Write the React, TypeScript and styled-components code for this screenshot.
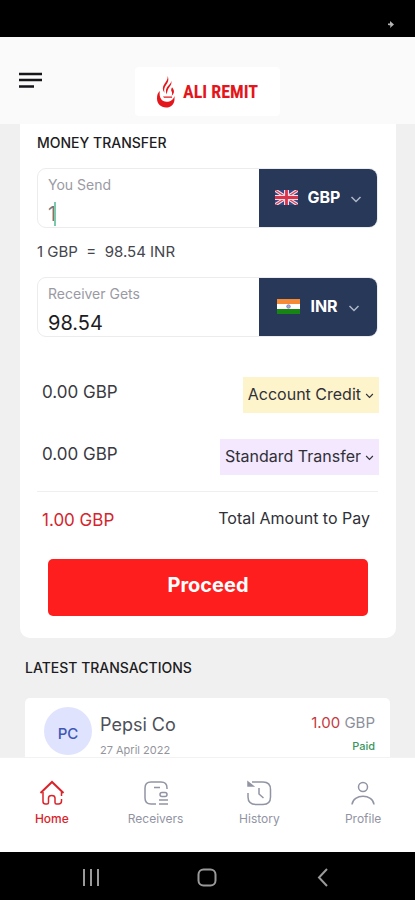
import React, { useState } from "react";
import styled, { createGlobalStyle } from "styled-components";

const GlobalStyle = createGlobalStyle`
  * { box-sizing: border-box; }
  body {
    margin: 0;
    font-family: Inter, "Open Sans", sans-serif;
    color: #1c1c22;
    background: #f0f0f0;
  }
  h2, p { margin: 0; }
  button, input, select { font: inherit; color: inherit; }
`;

const Screen = styled.div`
  display: flex;
  flex-direction: column;
  height: 100vh;
`;

const StatusBar = styled.div`
  display: flex;
  justify-content: flex-end;
  align-items: flex-end;
  flex: none;
  height: 37px;
  padding: 0 21px 8px;
  background: #000;
`;

const Header = styled.header`
  display: grid;
  grid-template-columns: 1fr auto 1fr;
  align-items: center;
  flex: none;
  height: 87px;
  padding: 22px 16px 0;
  background: #fafafa;
`;

const MenuButton = styled.button`
  display: flex;
  justify-self: start;
  align-self: start;
  margin-top: 13px;
  padding: 0 3px;
  border: 0;
  background: none;
`;

const Logo = styled.a`
  display: flex;
  align-items: center;
  gap: 8px;
  height: 49px;
  padding: 0 22px;
  border-radius: 4px;
  background: #fff;
  color: #e4161b;
  font-family: "Liberation Sans Narrow", "Roboto Condensed", "Open Sans Condensed", "Liberation Sans", sans-serif;
  font-size: 18px;
  font-weight: 700;
  text-decoration: none;
  white-space: nowrap;
`;

const Content = styled.main`
  flex: 1;
  min-height: 0;
  overflow-y: auto;
  scrollbar-width: none;
`;

const TransferCard = styled.form`
  margin: 0 19px 0 20px;
  padding: 9px 18px 22px 17px;
  border-radius: 0 0 10px 10px;
  background: #fff;
`;

const Title = styled.h2`
  font-size: 14px;
  line-height: 20px;
  font-weight: 500;
`;

const AmountBox = styled.div`
  display: flex;
  height: 60px;
  border: 1px solid #ececef;
  border-radius: 9px;
  overflow: hidden;
`;

const SendBox = styled(AmountBox)`
  margin-top: 15px;
`;

const AmountField = styled.label`
  display: flex;
  flex: 1;
  flex-direction: column;
  min-width: 0;
  padding: 7px 10px 0;
  color: #9a9aa3;
  font-size: 14px;
  line-height: 18px;
`;

const AmountLine = styled.span`
  display: flex;
  align-items: center;
  margin-top: 8px;
`;

const AmountInput = styled.input<{ $short?: boolean }>`
  width: ${(p) => (p.$short ? "6px" : "100%")};
  height: 24px;
  padding: 0;
  border: 0;
  outline: 0;
  background: none;
  color: ${(p) => (p.$short ? "#77777d" : "#1c1c22")};
  font-size: 20px;
`;

const Caret = styled.span`
  width: 2px;
  height: 24px;
  background: #7cc9ad;
`;

const CurrencyPicker = styled.label`
  display: flex;
  align-items: center;
  justify-content: center;
  gap: 10px;
  flex: none;
  width: 119px;
  margin: -1px;
  padding-bottom: 2px;
  background: #283858;
  color: #fff;
`;

const CurrencySelect = styled.select`
  appearance: none;
  field-sizing: content;
  padding: 0;
  border: 0;
  outline: 0;
  background: transparent;
  font-size: 16px;
  font-weight: 700;
`;

const Rate = styled.p`
  margin: 14px 0 15px;
  color: #45454d;
  font-size: 15px;
  line-height: 20px;
  white-space: pre;
`;

const FeeRow = styled.div<{ $top: number }>`
  display: flex;
  align-items: center;
  justify-content: space-between;
  height: 36px;
  margin: ${(p) => p.$top}px -1px 0 5px;
`;

const Fee = styled.span<{ $due?: boolean }>`
  padding-bottom: 6px;
  color: ${(p) => (p.$due ? "#d4252d" : "#3a3a42")};
  font-size: 17px;
  line-height: 20px;
`;

const Pill = styled.label<{ $tone: string }>`
  display: flex;
  align-items: center;
  gap: 4px;
  height: 36px;
  padding: 0 5px 2px;
  background: ${(p) => p.$tone};
`;

const PillSelect = styled.select`
  appearance: none;
  field-sizing: content;
  padding: 0;
  border: 0;
  outline: 0;
  background: transparent;
  color: #303038;
  font-size: 16px;
`;

const Divider = styled.hr`
  height: 1px;
  margin: 16px 0 0;
  border: 0;
  background: #efeff1;
`;

const TotalRow = styled.div`
  display: flex;
  align-items: center;
  justify-content: space-between;
  margin: 16px 8px 0 5px;
  line-height: 20px;
`;

const TotalAmount = styled(Fee)`
  padding: 0;
`;

const TotalLabel = styled.span`
  color: #303038;
  font-size: 16px;
  padding-bottom: 3px;
`;

const Proceed = styled.button`
  display: block;
  width: calc(100% - 21px);
  height: 57px;
  margin: 28px 10px 0 11px;
  padding: 0 0 6px;
  border: 0;
  border-radius: 5px;
  background: #ff1e1e;
  color: #fff;
  font-size: 20px;
  font-weight: 700;
`;

const Latest = styled.section`
  padding: 20px 25px 0;
`;

const Transaction = styled.article`
  display: flex;
  gap: 8px;
  margin-top: 20px;
  padding: 9px 15px 9px 19px;
  border-radius: 5px;
  background: #fff;
`;

const Avatar = styled.span`
  display: flex;
  align-items: center;
  justify-content: center;
  flex: none;
  width: 48px;
  height: 48px;
  padding-top: 4px;
  border-radius: 50%;
  background: #dfe3fe;
  color: #3e57b5;
  font-size: 15px;
  font-weight: 500;
`;

const Details = styled.div<{ $end?: boolean }>`
  display: flex;
  flex: ${(p) => (p.$end ? "none" : 1)};
  flex-direction: column;
  gap: ${(p) => (p.$end ? 5 : 7)}px;
  align-items: ${(p) => (p.$end ? "flex-end" : "flex-start")};
  padding-top: ${(p) => (p.$end ? 6 : 7)}px;
`;

const Name = styled.span`
  color: #4d5058;
  font-size: 18px;
  line-height: 22px;
`;

const DateText = styled.time`
  color: #94959c;
  font-size: 11px;
  line-height: 14px;
`;

const Amount = styled.span`
  color: #8c8f9c;
  font-size: 15px;
  line-height: 20px;
`;

const Red = styled.span`
  color: #c53a3f;
`;

const Paid = styled.span`
  color: #3b9560;
  font-size: 11px;
  line-height: 16px;
  font-weight: 500;
`;

const TabBar = styled.nav`
  display: grid;
  grid-template-columns: repeat(4, 1fr);
  flex: none;
  height: 95px;
  padding-top: 22px;
  border-top: 1px solid #f2f2f2;
  background: #fff;
`;

const Tab = styled.a<{ $active?: boolean }>`
  display: flex;
  flex-direction: column;
  align-items: center;
  gap: 5px;
  color: ${(p) => (p.$active ? "#d9242b" : "#9194a3")};
  font-size: 12px;
  line-height: 16px;
  font-weight: ${(p) => (p.$active ? 500 : 400)};
  text-decoration: none;
`;

const SystemBar = styled.div`
  display: flex;
  align-items: center;
  justify-content: space-between;
  flex: none;
  height: 48px;
  padding: 3px 79px 0 78px;
  background: #000;
`;

const SystemButton = styled.button`
  display: flex;
  padding: 0;
  border: 0;
  background: none;
  color: #9a9a9a;
`;

function UkFlag() {
  return (
    <svg width="23" height="15" viewBox="0 0 23 15" aria-hidden="true">
      <rect width="23" height="15" fill="#354a8c" />
      <path d="M0 0 23 15M23 0 0 15" stroke="#f4dfe6" strokeWidth="3.4" />
      <path d="M0 0 23 15M23 0 0 15" stroke="#d84558" strokeWidth="1.2" />
      <path d="M11.5 0V15M0 7.5H23" stroke="#f4dfe6" strokeWidth="5" />
      <path d="M11.5 0V15M0 7.5H23" stroke="#d8344b" strokeWidth="2.8" />
    </svg>
  );
}

function IndiaFlag() {
  return (
    <svg width="23" height="15" viewBox="0 0 23 15" aria-hidden="true">
      <rect width="23" height="15" fill="#fff" />
      <rect width="23" height="5" fill="#f58b35" />
      <rect y="10" width="23" height="5" fill="#168514" />
      <circle cx="11.5" cy="7.5" r="1.8" fill="#a5a8cf" stroke="#6c70aa" strokeWidth=".7" />
    </svg>
  );
}

function Chevron({ size }: { size: number }) {
  return (
    <svg width={size} height={size} viewBox="0 0 12 12" fill="none" stroke="currentColor" strokeWidth="1.5" aria-hidden="true">
      <path d="m1.5 4 4.5 4.5L10.5 4" />
    </svg>
  );
}

const lightChevron = "#aeb7c8";

const ChevronTint = styled.span<{ $color: string }>`
  display: flex;
  padding-top: 3px;
  color: ${(p) => p.$color};
`;

function Flame() {
  return (
    <svg width="18" height="32" viewBox="0 0 18 32" fill="currentColor" aria-hidden="true">
      <path d="M2.8 15C.8 16.8 0 19 0 22.500c0 5.500 4 9 9 9s8.500-3.400 8.500-8.300V20c-1.200 3.600-4 5.800-8 5.800C5 25.800 1.800 22 2.800 15Z" />
      <path d="M10.700 0c1.500 4.500.2 6.500-1.800 9.200-1.700 2.400-2 4.200-1.500 7.500-2.200-3-2-6 .2-8.900C9.700 5 10.800 3.300 10.700 0Z" />
      <path d="M14.300 5c.7 3-.8 4.600-2.200 6.500-1.500 2-1.800 4-2.400 7-1.400-3.500-.8-5.700.9-8 1.600-2 3.300-3 3.700-5.500Z" />
      <path d="M15 11.200c3 3.300 2.300 6.300-.4 8.800.8-2.300.7-3.100-.1-4.700-.6-1.300-.3-2.500.5-4.100ZM6 20.500h9v1.300H7Z" />
    </svg>
  );
}

const icons: Record<string, React.ReactNode> = {
  Home: (
    <>
      <path strokeWidth="2" d="M1.500 13 13 2l11.500 11" />
      <path d="M4 12v9.500c0 1.800.8 2.500 2.500 2.500H8c1 0 1.500-.5 1.500-1.500V18c0-3.500 6.500-3.500 6.500 0v4.500c0 1 .5 1.500 1.500 1.500h2c2 0 3-1 3-3v-2M22.500 12v4" />
    </>
  ),
  Receivers: (
    <>
      <path d="M24 9V8c0-4-2-6-6-6H8C4 2 2 4 2 8v10c0 4 2 6 6 6h5M11 7.500h6" />
      <rect x="17" y="12.500" width="7" height="4" rx="2" />
      <path d="M16 20h9M16 24h9" />
    </>
  ),
  History: (
    <>
      <path d="M6 2h11c5 0 7.500 2.500 7.500 7.500V17c0 5-2.500 7.500-7.500 7.500h-6.500C5 24.500 2 22 2 17v-4" />
      <path d="M2 2v4h5Z" fill="currentColor" />
      <path d="M13 8v6l4.500 4" />
    </>
  ),
  Profile: (
    <>
      <circle cx="13" cy="7" r="4.500" />
      <path d="M2 24.500c1-11 21-11 22 0" />
    </>
  ),
};

const tabs = ["Home", "Receivers", "History", "Profile"];

export default function App() {
  const [send, setSend] = useState("1");
  return (
    <>
      <GlobalStyle />
      <Screen>
        <StatusBar>
          <svg width="6" height="9" viewBox="0 0 6 9" fill="#b5b5b5" aria-hidden="true">
            <path d="M2 1 6 4.500 2 8 2.500 5.500 0 5V3.500h2Z" />
          </svg>
        </StatusBar>
        <Header>
          <MenuButton aria-label="Menu">
            <svg width="23" height="17" viewBox="0 0 23 17" stroke="#15151a" strokeWidth="2.400" aria-hidden="true">
              <path d="M0 2h23M0 8h23M0 14.500h15" />
            </svg>
          </MenuButton>
          <Logo href="#home">
            <Flame />
            ALI REMIT
          </Logo>
        </Header>
        <Content>
          <TransferCard onSubmit={(e) => e.preventDefault()}>
            <Title>MONEY TRANSFER</Title>
            <SendBox>
              <AmountField>
                You Send
                <AmountLine>
                  <AmountInput $short value={send} onChange={(e) => setSend(e.target.value)} />
                  <Caret />
                </AmountLine>
              </AmountField>
              <CurrencyPicker>
                <UkFlag />
                <CurrencySelect aria-label="Send currency">
                  <option>GBP</option>
                </CurrencySelect>
                <ChevronTint $color={lightChevron}>
                  <Chevron size={12} />
                </ChevronTint>
              </CurrencyPicker>
            </SendBox>
            <Rate>{"1 GBP  =  98.54 INR"}</Rate>
            <AmountBox>
              <AmountField>
                Receiver Gets
                <AmountLine>
                  <AmountInput defaultValue="98.54" />
                </AmountLine>
              </AmountField>
              <CurrencyPicker>
                <IndiaFlag />
                <CurrencySelect aria-label="Receive currency">
                  <option>INR</option>
                </CurrencySelect>
                <ChevronTint $color={lightChevron}>
                  <Chevron size={12} />
                </ChevronTint>
              </CurrencyPicker>
            </AmountBox>
            <FeeRow $top={40}>
              <Fee>0.00 GBP</Fee>
              <Pill $tone="#fdf4cb">
                <PillSelect aria-label="Payment method">
                  <option>Account Credit</option>
                </PillSelect>
                <ChevronTint $color="#303038">
                  <Chevron size={9} />
                </ChevronTint>
              </Pill>
            </FeeRow>
            <FeeRow $top={26}>
              <Fee>0.00 GBP</Fee>
              <Pill $tone="#f3e8fd">
                <PillSelect aria-label="Transfer speed">
                  <option>Standard Transfer</option>
                </PillSelect>
                <ChevronTint $color="#303038">
                  <Chevron size={9} />
                </ChevronTint>
              </Pill>
            </FeeRow>
            <Divider />
            <TotalRow>
              <TotalAmount $due>1.00 GBP</TotalAmount>
              <TotalLabel>Total Amount to Pay</TotalLabel>
            </TotalRow>
            <Proceed type="submit">Proceed</Proceed>
          </TransferCard>
          <Latest>
            <Title>LATEST TRANSACTIONS</Title>
            <Transaction>
              <Avatar>PC</Avatar>
              <Details>
                <Name>Pepsi Co</Name>
                <DateText>27 April 2022</DateText>
              </Details>
              <Details $end>
                <Amount>
                  <Red>1.00</Red> GBP
                </Amount>
                <Paid>Paid</Paid>
              </Details>
            </Transaction>
          </Latest>
        </Content>
        <TabBar>
          {tabs.map((tab, i) => (
            <Tab key={tab} href={"#" + tab.toLowerCase()} $active={i === 0}>
              <svg width="26" height="26" viewBox="0 0 26 26" fill="none" stroke="currentColor" strokeWidth="1.500" aria-hidden="true">
                {icons[tab]}
              </svg>
              {tab}
            </Tab>
          ))}
        </TabBar>
        <SystemBar>
          <SystemButton aria-label="Recent apps">
            <svg width="26" height="20" viewBox="0 0 26 20" stroke="currentColor" strokeWidth="2" aria-hidden="true">
              <path d="M6 1v17M13 1v17M20 1v17" />
            </svg>
          </SystemButton>
          <SystemButton aria-label="Home screen">
            <svg width="20" height="20" viewBox="0 0 20 20" fill="none" stroke="currentColor" strokeWidth="2" aria-hidden="true">
              <rect x="1.500" y="1.500" width="17" height="16" rx="5" />
            </svg>
          </SystemButton>
          <SystemButton aria-label="Back">
            <svg width="26" height="20" viewBox="0 0 26 20" fill="none" stroke="currentColor" strokeWidth="2" aria-hidden="true">
              <path d="m17 1-8 8.500 8 8.500" />
            </svg>
          </SystemButton>
        </SystemBar>
      </Screen>
    </>
  );
}
